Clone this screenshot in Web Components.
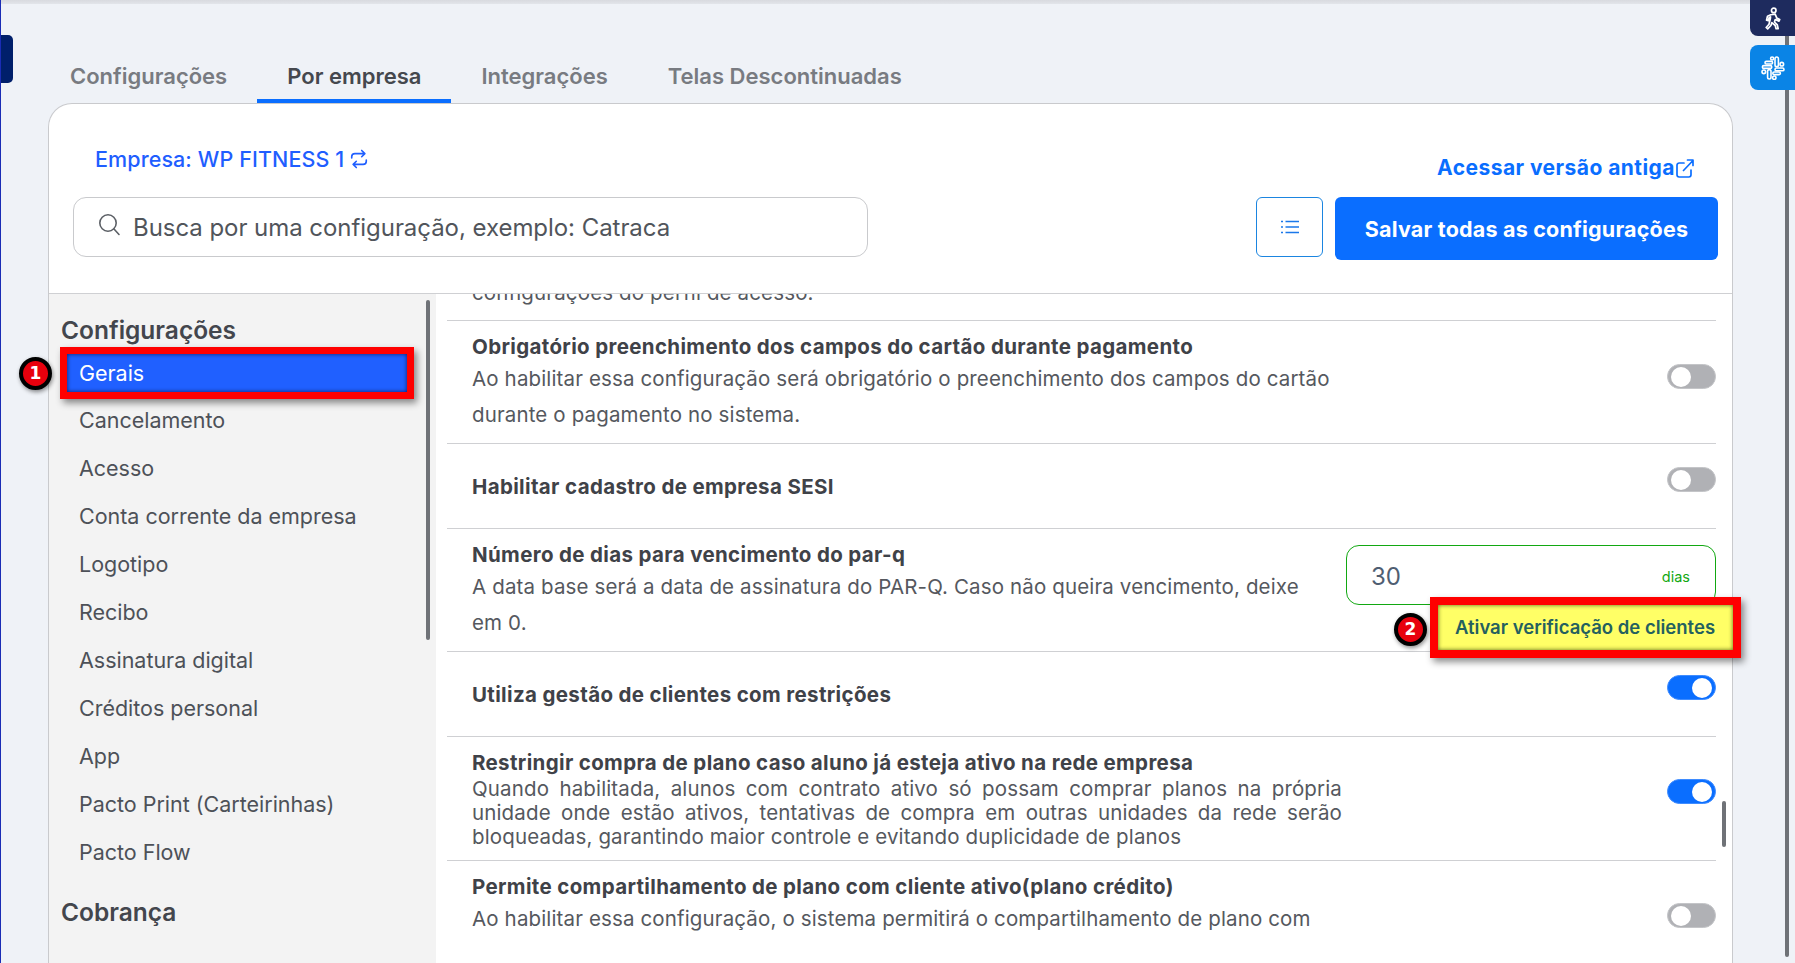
<!DOCTYPE html>
<html lang="pt-BR"><head><meta charset="utf-8"><title>Configurações</title>
<style>
html,body{margin:0;height:963px;overflow:hidden;background:#eff2f7;font-family:Inter,"Liberation Sans",sans-serif;}
</style></head>
<body>
<app-shell>
  <page-tabs slot="tabs"></page-tabs>
  <settings-card slot="card">
    <card-header slot="header"></card-header>
    <side-menu slot="menu"></side-menu>
    <config-list slot="list">
      <config-row style="--tt:0px;--h:46px;--off:-20px"><span slot="desc">configurações do perfil de acesso.</span></config-row>
      <config-row style="--tt:13px;--ct:43px;--h:122px">
        <span slot="title">Obrigatório preenchimento dos campos do cartão durante pagamento</span>
        <span slot="desc">Ao habilitar essa configuração será obrigatório o preenchimento dos campos do cartão<br>durante o pagamento no sistema.</span>
        <toggle-switch slot="control"></toggle-switch>
      </config-row>
      <config-row style="--tt:30px;--ct:23px;--h:84px">
        <span slot="title">Habilitar cadastro de empresa SESI</span>
        <toggle-switch slot="control"></toggle-switch>
      </config-row>
      <config-row style="--tt:13px;--ct:16px;--h:122px;--cw:370px">
        <span slot="title">Número de dias para vencimento do par-q</span>
        <span slot="desc">A data base será a data de assinatura do PAR-Q. Caso não queira vencimento, deixe<br>em 0.</span>
        <days-input slot="control"></days-input>
      </config-row>
      <config-row style="--tt:30px;--ct:23px;--h:84px">
        <span slot="title">Utiliza gestão de clientes com restrições</span>
        <toggle-switch slot="control" on></toggle-switch>
      </config-row>
      <config-row style="--tt:13px;--ct:42px;--h:123px;--lh:24px;--ta:justify">
        <span slot="title">Restringir compra de plano caso aluno já esteja ativo na rede empresa</span>
        <span slot="desc">Quando habilitada, alunos com contrato ativo só possam comprar planos na própria unidade onde estão ativos, tentativas de compra em outras unidades da rede serão bloqueadas, garantindo maior controle e evitando duplicidade de planos</span>
        <toggle-switch slot="control" on></toggle-switch>
      </config-row>
      <config-row style="--tt:13px;--ct:42px;--h:110px">
        <span slot="title">Permite compartilhamento de plano com cliente ativo(plano crédito)</span>
        <span slot="desc">Ao habilitar essa configuração, o sistema permitirá o compartilhamento de plano com</span>
        <toggle-switch slot="control"></toggle-switch>
      </config-row>
    </config-list>
  </settings-card>
</app-shell>
<script>
const FONT='Inter,"Liberation Sans",sans-serif';
function def(name,html,init){
  customElements.define(name,class extends HTMLElement{
    constructor(){super();const r=this.attachShadow({mode:'open'});r.innerHTML=html;if(init)init(this,r);}
  });
}
def('app-shell',`<style>
:host{display:block;position:relative;height:963px;overflow:hidden;box-sizing:border-box;border-left:1px solid #1a2cb5;
 --font:${FONT};font-family:var(--font)}
.top{position:absolute;left:0;right:0;top:0;height:4px;background:linear-gradient(#d8dadf,#e2e5ea)}
.handle{position:absolute;left:-6px;top:35px;width:18px;height:48px;background:#001f6b;border-radius:5px}
.bar{position:absolute;left:1784px;top:30px;width:4px;height:927px;background:#6f7277;border-radius:2px}
.side{position:absolute;left:1749px;width:45px;display:flex;align-items:center;justify-content:center;box-sizing:border-box}
.a{top:0;height:36px;background:#1e2b5e;border-radius:0 0 0 8px}
.b{top:45px;height:45px;background:#0a84e6;border-radius:8px 0 0 8px}
</style>
<div class="top"></div><div class="handle"></div><div class="bar"></div>
<div class="side a"><svg width="17" height="23" viewBox="0 0 18 24" fill="none" stroke="#fff" stroke-width="1.8" stroke-linejoin="round" stroke-linecap="round"><circle cx="10.3" cy="3.4" r="2.4"/><path d="M7.2 8l4.6-.6 1.8 4.2 3 1.5-.8 1.7-3.9-1.7-.8 2.6 3 3 .9 4.1h-2.2l-.9-3.4-3.6-3-1 3-3.4 3.6-1.6-1.5 3-3.4 1.4-5.8.2-2-1.5.9-.8 3-1.9-.5 1-4z"/></svg></div>
<div class="side b"><svg width="24" height="24" viewBox="0 0 24 24" fill="none" stroke="#fff" stroke-width="1.6"><rect x="9.6" y="1" width="3" height="3" rx="1.5"/><rect x="14" y="1" width="3.4" height="9.6" rx="1.7"/><rect x="19" y="6.4" width="3.6" height="3.6" rx="1.8"/><rect x="1.4" y="9.6" width="9.4" height="2.8" rx="1.4"/><rect x="4" y="5.4" width="7.6" height="2.6" rx="1.3"/><rect x="14" y="12" width="9" height="2.8" rx="1.4"/><rect x="1" y="14" width="3.6" height="3.6" rx="1.8"/><rect x="6.6" y="13.6" width="3.4" height="9.4" rx="1.7"/><rect x="11.6" y="20" width="3.4" height="3.4" rx="1.7"/><rect x="11.8" y="16" width="7.6" height="2.6" rx="1.3"/></svg></div>
<slot name="tabs"></slot><slot name="card"></slot>`);

def('page-tabs',`<style>
:host{display:flex;align-items:flex-end;height:103px;box-sizing:border-box;padding-left:39px}
.t{display:block;height:38px;padding:0 30px;box-sizing:border-box;font:600 22px/22px var(--font);color:#787b81;letter-spacing:0;border-bottom:4px solid transparent;border-radius:3px 3px 0 0;white-space:nowrap}
.on{color:#45484e;border-bottom-color:#0a6eff}
</style>
<span class="t">Configurações</span><span class="t on">Por empresa</span><span class="t">Integrações</span><span class="t">Telas Descontinuadas</span>`);

def('settings-card',`<style>
:host{display:grid;grid-template-columns:387px 1fr;grid-template-rows:190px 1fr;width:1685px;margin-left:47px;height:860px;box-sizing:border-box;background:#fff;border:1px solid #c9cacd;border-bottom:0;border-radius:24px 24px 0 0}
.h{grid-column:1/3;border-bottom:1px solid #cfd0d3}
</style>
<div class="h"><slot name="header"></slot></div><slot name="menu"></slot><slot name="list"></slot>`);

def('card-header',`<style>
:host{display:block;height:189px;box-sizing:border-box;padding:0 14px 0 24px;font-family:var(--font)}
.row1{display:flex;justify-content:space-between;height:93px}
.emp{display:flex;align-items:center;gap:6px;height:30px;margin:40px 0 0 22px;font:500 21.5px/30px var(--font);color:#1f5eff;letter-spacing:.1px}
.old{display:flex;align-items:center;gap:1px;height:30px;margin:49px 0 0;padding-right:24px;font:700 21px/30px var(--font);color:#0a6eff;letter-spacing:.45px}
.row2{display:flex;align-items:flex-start}
.search{display:flex;align-items:center;gap:12px;width:795px;height:60px;box-sizing:border-box;border:1px solid #c9cacd;border-radius:13px;padding:2px 0 0 24px;font:400 24px/30px var(--font);color:#51555b;letter-spacing:-.05px}
.search svg{margin-top:-7px}
.list{display:flex;align-items:center;justify-content:center;width:67px;height:60px;box-sizing:border-box;margin-left:388px;border:1px solid #1b85e0;border-radius:6px}
.save{display:flex;align-items:center;justify-content:center;width:383px;height:63px;margin-left:12px;border-radius:6px;background:#0a6eff;color:#fff;font:700 21.5px/26px var(--font);letter-spacing:.2px}
</style>
<div class="row1">
 <div class="emp">Empresa: WP FITNESS 1<svg width="18" height="20" viewBox="0 0 20 22" fill="none" stroke="#1f5eff" stroke-width="1.8" stroke-linecap="round" stroke-linejoin="round"><path d="M13 1.5l3.5 3.5-3.5 3.5M16.5 5H5.5a3.6 3.6 0 0 0-3.6 3.6v1.2M7 20.5L3.5 17 7 13.5M3.5 17h11a3.6 3.6 0 0 0 3.6-3.6v-1.2"/></svg></div>
 <div class="old">Acessar versão antiga<svg width="18" height="19" viewBox="0 0 18 19" fill="none" stroke="#0a6eff" stroke-width="1.7" stroke-linecap="round" stroke-linejoin="round"><path d="M8 4H3.2A2.2 2.2 0 0 0 1 6.2v9.6A2.2 2.2 0 0 0 3.2 18h9.6a2.2 2.2 0 0 0 2.2-2.2V11M7.5 11.5L17 1.5M11.5 1H17v5.5"/></svg></div>
</div>
<div class="row2">
 <div class="search"><svg width="23" height="23" viewBox="0 0 23 23" fill="none" stroke="#5c6066" stroke-width="1.6" stroke-linecap="round"><circle cx="10" cy="10" r="8.2"/><path d="M16 16l5 5.5"/></svg><span>Busca por uma configuração, exemplo: Catraca</span></div>
 <div class="list"><svg width="18" height="14" viewBox="0 0 18 14" fill="none" stroke="#1b78ea" stroke-width="1.5"><path d="M4.5 1.5H18M4.5 7H18M4.5 12.5H18M0 1.5h2M0 7h2M0 12.5h2"/></svg></div>
 <div class="save">Salvar todas as configurações</div>
</div>`);

def('step-badge',`<style>
:host{display:flex;position:absolute;align-items:center;justify-content:center;width:33px;height:33px;box-sizing:border-box;border:4px solid #000;border-radius:50%;background:#e8000d;color:#fff;font:700 17px/1 "DejaVu Sans",sans-serif;box-shadow:1px 2px 4px rgba(0,0,0,.45)}
</style><slot></slot>`);

def('side-menu',`<style>
:host{display:block;position:relative;height:670px;box-sizing:border-box;background:#f3f3f3;padding:21px 0 0 12px;font-family:var(--font);color:#4d5158}
h2{margin:0;font:600 24.5px/31px var(--font);color:#43464d}
ul{list-style:none;margin:8px 0 0;padding:0}
li{height:38px;width:340px;margin:0 0 10px 6px;box-sizing:border-box;padding-left:12px;font:400 21.5px/38px var(--font);white-space:nowrap;letter-spacing:-.02px}
li.sel{position:relative;margin-top:1px;margin-bottom:9px;background:#2060ff;color:#fff;box-shadow:inset 0 0 4px rgba(0,0,30,.7),0 0 0 7px #f00,3px 4px 7px 7px rgba(0,0,0,.45)}
h2.c{margin-top:26px}
.sb{position:absolute;left:377px;top:6px;width:4px;height:340px;background:#6f7277;border-radius:2px}
step-badge{left:-48px;top:3px}
</style>
<h2>Configurações</h2>
<ul><li class="sel">Gerais<step-badge>1</step-badge></li><li>Cancelamento</li><li>Acesso</li><li>Conta corrente da empresa</li><li>Logotipo</li><li>Recibo</li><li>Assinatura digital</li><li>Créditos personal</li><li>App</li><li>Pacto Print (Carteirinhas)</li><li>Pacto Flow</li></ul>
<h2 class="c">Cobrança</h2>
<div class="sb"></div>`);

def('config-list',`<style>
:host{display:block;position:relative;height:670px;clip-path:inset(0 -120px -120px -120px);box-sizing:border-box;padding:0 16px 0 11px}
.sb{position:absolute;right:6px;top:507px;width:4px;height:46px;background:#6f7277;border-radius:2px}
</style><slot></slot><div class="sb"></div>`);

def('config-row',`<style>
:host{display:grid;grid-template-columns:1fr var(--cw,49px);height:var(--h);margin-top:var(--off,0);border-bottom:1px solid #cfd0d3;box-sizing:content-box;padding-left:25px;font-family:var(--font)}
.txt{padding-top:var(--tt,0);width:870px}
.ti{font:700 20.5px/26px var(--font);color:#3f4248;letter-spacing:.35px;margin-bottom:1px}
.de{font:400 20.5px/var(--lh,36px) var(--font);color:#55585e;letter-spacing:.14px;text-align:var(--ta,left)}
.ct{padding-top:var(--ct,0)}
</style>
<div class="txt"><div class="ti"><slot name="title"></slot></div><div class="de"><slot name="desc"></slot></div></div>
<div class="ct"><slot name="control"></slot></div>`);

def('toggle-switch',`<style>
:host{display:flex;align-items:center;width:49px;height:25px;box-sizing:border-box;padding:0 3px;border-radius:13px;background:#b0b1b5;border:1px solid #c4c5c8}
:host([on]){background:#0a6eff;justify-content:flex-end;border-color:#3f8cff}
i{display:block;width:20px;height:20px;border-radius:50%;background:#fff}
</style><i></i>`);

def('days-input',`<style>
:host{display:flex;position:relative;align-items:center;justify-content:space-between;width:370px;height:60px;box-sizing:border-box;border:1px solid #12a812;border-radius:13px;padding:3px 25px 0 24px;font-family:var(--font)}
.n{font:400 24px/30px var(--font);color:#4f5e72}
.u{font:400 14.5px/20px var(--font);color:#12a812}
.tip{position:absolute;left:91px;top:59px;width:295px;height:45px;display:flex;align-items:center;padding:0 0 1px 17px;box-sizing:border-box;background:#ffff66;color:#24605f;font:600 18.5px/24px var(--font);white-space:nowrap;box-shadow:inset 0 0 4px rgba(40,60,0,.8),0 0 0 8px #f00,3px 4px 7px 8px rgba(0,0,0,.45)}
step-badge{left:47px;top:67px}
</style><span class="n">30</span><span class="u">dias</span><div class="tip">Ativar verificação de clientes</div><step-badge>2</step-badge>`);
</script>
</body></html>
